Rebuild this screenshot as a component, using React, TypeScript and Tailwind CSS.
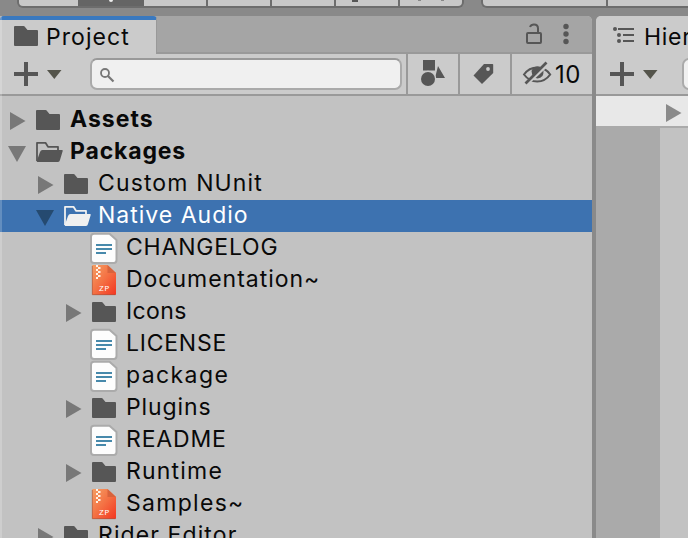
import React from "react";

type Kind = "folder" | "open" | "doc" | "zip";
type Row = { name: string; depth: number; kind: Kind; arrow?: "right" | "down"; bold?: boolean; selected?: boolean; track: string };

const rows: Row[] = [
  { name: "Assets", depth: 0, kind: "folder", arrow: "right", bold: true, track: "tracking-[1px]" },
  { name: "Packages", depth: 0, kind: "open", arrow: "down", bold: true, track: "tracking-[0.85px]" },
  { name: "Custom NUnit", depth: 1, kind: "folder", arrow: "right", track: "tracking-[1.13px]" },
  { name: "Native Audio", depth: 1, kind: "open", arrow: "down", selected: true, track: "tracking-[1px]" },
  { name: "CHANGELOG", depth: 2, kind: "doc", track: "tracking-[0.8px]" },
  { name: "Documentation~", depth: 2, kind: "zip", track: "tracking-[0.98px]" },
  { name: "Icons", depth: 2, kind: "folder", arrow: "right", track: "tracking-[0.4px]" },
  { name: "LICENSE", depth: 2, kind: "doc", track: "tracking-[0.75px]" },
  { name: "package", depth: 2, kind: "doc", track: "tracking-[1.4px]" },
  { name: "Plugins", depth: 2, kind: "folder", arrow: "right", track: "tracking-[0.9px]" },
  { name: "README", depth: 2, kind: "doc", track: "tracking-[0.85px]" },
  { name: "Runtime", depth: 2, kind: "folder", arrow: "right", track: "tracking-[1.2px]" },
  { name: "Samples~", depth: 2, kind: "zip", track: "tracking-[1.3px]" },
  { name: "Rider Editor", depth: 1, kind: "folder", arrow: "right", track: "tracking-[1.1px]" },
];

const indents = ["pl-0", "pl-[28px]", "pl-[56px]"];

function Folder() {
  return (
    <svg className="block h-8 w-8 shrink-0" viewBox="0 0 32 32" fill="#565656">
      <path d="M5 6h8.500q1 0 1.500 1l2.500 3H27q1 0 1 1v14q0 1-1 1H5q-1 0-1-1V7q0-1 1-1z" />
    </svg>
  );
}

function OpenFolder({ selected }: { selected?: boolean }) {
  const color = selected ? "#f0f0f0" : "#565656";
  return (
    <svg className="block h-8 w-8 shrink-0" viewBox="0 0 32 32">
      <path d="M5 25V6.800h8.500L16 10.800h10V14" fill="none" stroke={color} strokeWidth="1.800" strokeLinejoin="round" />
      <path d="M10.500 14H30q1 0 .7 1L28 24q-.5 2-2 2H5.500q-1 0-.7-1L8 16q.7-2 2.500-2z" fill={color} />
    </svg>
  );
}

function Doc() {
  return (
    <svg className="block h-8 w-8 shrink-0 overflow-visible" viewBox="0 0 32 32">
      <path d="M6 1.700h15.500l7 6.300v20q0 3-2.700 3H6q-3 0-3-3V4.700q0-3 3-3z" fill="#fdfdfd" stroke="#ababab" strokeWidth="2" strokeLinejoin="round" />
      <path d="M8 12h16v2H8zM8 16h16v2H8zM8 20h10v2H8z" fill="#4789ab" />
    </svg>
  );
}

function Zip() {
  return (
    <svg className="block h-8 w-8 shrink-0" viewBox="0 0 32 32">
      <defs>
        <linearGradient id="zipFill" x1="0" y1="0" x2="1" y2="1">
          <stop offset="0" stopColor="#f5a065" />
          <stop offset=".5" stopColor="#f47043" />
          <stop offset="1" stopColor="#f33520" />
        </linearGradient>
      </defs>
      <path d="M5 1h14.500L28 9v21q0 1-1 1H5q-1 0-1-1V2q0-1 1-1z" fill="url(#zipFill)" />
      <path d="M19.500 1L28 9h-8.500z" fill="#d8633c" />
      <path d="M4.300 2v28.700H27.500" fill="none" stroke="#9c5641" strokeWidth=".6" />
      <path d="M8 1h2v2H8zM10 3h2.500v2H10zM8 5h2v2H8zM10 7h2.500v2H10zM8 9h2v2H8zM10 11h2.500v2H10zM8 13h2v2H8z" fill="#fff2e5" />
      <text x="11" y="27" fontFamily="Liberation Mono, monospace" fontSize="8" letterSpacing=".6" fill="#fff">ZP</text>
    </svg>
  );
}

function Arrow({ dir, selected }: { dir?: "right" | "down"; selected?: boolean }) {
  return (
    <svg className="block h-8 w-6 shrink-0" viewBox="0 0 24 32" fill={selected ? "#254a70" : "#787878"}>
      {dir === "right" && <path d="M2 8l15.500 9L2 26z" />}
      {dir === "down" && <path d="M0 10h18l-9 16z" />}
    </svg>
  );
}

function TreeRow({ row }: { row: Row }) {
  return (
    <div className={`flex h-8 shrink-0 items-start ${row.selected ? "bg-[#3d72b0]" : ""}`}>
      <div className={`flex ${indents[row.depth]}`}>
        <div className="ml-2 flex">
          <Arrow dir={row.arrow} selected={row.selected} />
          {row.kind === "folder" && <Folder />}
          {row.kind === "open" && <OpenFolder selected={row.selected} />}
          {row.kind === "doc" && <Doc />}
          {row.kind === "zip" && <Zip />}
        </div>
        <span className={`ml-1.5 whitespace-nowrap text-[23px] leading-[30px] ${row.track} ${row.bold ? "font-bold" : ""} ${row.selected ? "text-white" : "text-[#090909]"}`}>
          {row.name}
        </span>
      </div>
    </div>
  );
}

function AddButton() {
  return (
    <svg className="block h-10 w-14 shrink-0" viewBox="0 0 56 40">
      <path d="M10 8h4v10h10v4H14v10h-4V22H0v-4h10z" fill="#565656" />
      <path d="M33 16h14.500l-7.200 9z" fill="#54544b" />
    </svg>
  );
}

function TopStrip() {
  return (
    <div className="flex h-4 shrink-0 items-start bg-[#898989]">
      <div className="ml-[17px] flex h-2 w-[447px] overflow-hidden rounded-b-[6px] border-x-2 border-b-2 border-[#6d6d6d] bg-[#c8c8c8]">
        <div className="w-[59px]" />
        <div className="flex w-[66px] justify-center bg-[#656565]">
          <div className="h-[2px] w-1 rounded-b bg-[#eeeeee]" />
        </div>
        <div className="w-16 border-r-2 border-[#6d6d6d]" />
        <div className="w-16 border-r-2 border-[#6d6d6d]" />
        <div className="w-16 border-r-2 border-[#6d6d6d]" />
        <div className="w-16 border-r-2 border-[#6d6d6d]"><div className="ml-4 h-[2px] w-[6px] bg-[#565656]" /></div>
        <div className="flex gap-5 pl-[18px]"><i className="h-px w-[3px] bg-[#888888]" /><i className="h-px w-[3px] bg-[#888888]" /></div>
      </div>
      <div className="ml-[17px] flex h-2 flex-1 rounded-bl-[6px] border-b-2 border-l-2 border-[#6d6d6d] bg-[#c8c8c8]">
        <div className="w-[125px] border-r-2 border-[#6d6d6d]" />
      </div>
    </div>
  );
}

export default function App() {
  return (
    <div className="flex h-[538px] w-[688px] flex-col overflow-hidden bg-[#8a8a8a] font-['Inter','Liberation_Sans',sans-serif] text-[23px] text-[#090909]">
      <TopStrip />
      <div className="flex min-h-0 flex-1">
        <section className="relative flex w-[592px] shrink-0 flex-col overflow-hidden rounded-tr-[5px] bg-[#c2c2c2]">
          <div className="pointer-events-none absolute inset-y-0 left-0 w-0.5 bg-white/20" />
          <div className="flex h-[38px] shrink-0 bg-[#a5a5a5]">
            <div className="flex h-[38px] w-[157px] overflow-hidden rounded-t-[4px] border-t-4 border-r border-t-[#3a79bf] border-r-[#999999] bg-[#cbcbcb]">
              <div className="ml-2.5 flex"><Folder /></div>
              <span className="ml-1 leading-[34px] tracking-[1.05px]">Project</span>
            </div>
            <div className="flex flex-1 justify-end border-b-2 border-[#999999]">
              <svg className="block h-9 w-[70px]" viewBox="0 0 70 36">
                <rect x="5" y="17" width="14" height="10" rx="1" fill="none" stroke="#565656" strokeWidth="2" />
                <path d="M8 11q1-2.500 4-2.500 4 0 4 4V17" fill="none" stroke="#565656" strokeWidth="2" />
                <g fill="#565656"><circle cx="44" cy="10.500" r="2.700" /><circle cx="44" cy="18" r="2.700" /><circle cx="44" cy="25.500" r="2.700" /></g>
              </svg>
            </div>
          </div>
          <div className="flex h-[42px] shrink-0 border-b-2 border-[#999999] bg-[#cbcbcb]">
            <div className="ml-3.5"><AddButton /></div>
            <div className="mt-1 ml-5 flex h-8 w-[312px] rounded-[7px] border-2 border-[#aaaaaa] border-t-[#999999] bg-[#f0f0f0]">
              <svg className="mt-2 ml-2 h-4 w-4" viewBox="0 0 16 16" fill="none" stroke="#777777" strokeWidth="1.800">
                <circle cx="5" cy="5" r="4" /><path d="M8 8l5.500 5.500" strokeWidth="2.200" />
              </svg>
            </div>
            <div className="ml-1 w-[52px] border-l-2 border-[#999999]">
              <svg className="h-10 w-[50px]" viewBox="0 0 50 40" fill="#565656">
                <path d="M15 6h12v10.500h-12zM30 12l7 12H27z" />
                <circle cx="20" cy="25" r="8.300" fill="#cbcbcb" /><circle cx="20" cy="25" r="7" />
              </svg>
            </div>
            <div className="w-[52px] border-l-2 border-[#999999]">
              <svg className="h-10 w-[50px]" viewBox="0 0 50 40">
                <path d="M24 10h8.500q.7 0 .7.700V19L22 30 13.500 21.500z" fill="#565656" />
                <circle cx="28" cy="15" r="1.900" fill="#cbcbcb" />
              </svg>
            </div>
            <div className="flex flex-1 border-l-2 border-[#999999]">
              <svg className="ml-2.5 h-10 w-8 shrink-0" viewBox="0 0 32 40">
                <path d="M2 20.500q5-7 13.200-7t13 7q-5 7-13 7T2 20.500z" fill="none" stroke="#565656" strokeWidth="2" />
                <path d="M9.500 17q1.500-4.500 6-4.500t6 4.500q.5 7-6 7.500-5.500-.5-6-7.500z" fill="#565656" />
                <path d="M4.500 30.500L26.500 10" stroke="#cbcbcb" strokeWidth="3" />
                <path d="M3.500 29.500L24.500 8.500" stroke="#565656" strokeWidth="2.700" />
              </svg>
              <span className="ml-px text-[24px] leading-[42px] tracking-[0.5px]">10</span>
            </div>
          </div>
          <div className="flex min-h-0 flex-1 flex-col overflow-hidden pt-2">
            {rows.map((row) => <TreeRow key={row.name} row={row} />)}
          </div>
        </section>
        <section className="ml-1 flex min-w-0 flex-1 flex-col overflow-hidden rounded-tl-[5px] bg-[#c2c2c2]">
          <div className="flex h-[38px] shrink-0 bg-[#cbcbcb]">
            <svg className="ml-4 h-9 w-8 shrink-0" viewBox="0 0 32 36" fill="#565656">
              <circle cx="3" cy="13" r="2" /><circle cx="7" cy="19" r="2" /><circle cx="7" cy="25" r="2" />
              <path d="M6 12h16v2H6zM11 18h11v2H11zM11 24h11v2H11z" />
            </svg>
            <span className="leading-[42px] tracking-[0.7px]">Hierarchy</span>
          </div>
          <div className="flex h-[42px] shrink-0 border-b-2 border-[#999999] bg-[#cbcbcb]">
            <div className="ml-3.5"><AddButton /></div>
            <div className="mt-1 ml-4 h-8 w-10 shrink-0 rounded-[7px] border-2 border-[#aaaaaa] bg-[#f0f0f0]" />
          </div>
          <div className="flex h-8 shrink-0 justify-end border-b-2 border-[#aaaaaa] bg-[#e8e8e8]">
            <svg className="h-[30px] w-6" viewBox="0 0 24 30" fill="#8a8a8a"><path d="M2 8l15.500 9L2 26z" /></svg>
          </div>
          <div className="w-16 flex-1 bg-[#aaaaaa]" />
        </section>
      </div>
    </div>
  );
}
